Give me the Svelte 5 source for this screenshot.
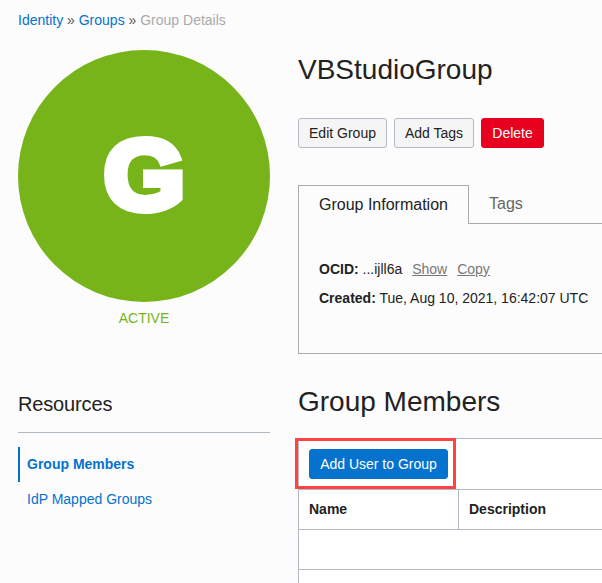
<script>
  const actions = [
    { label: 'Edit Group', kind: 'plain', width: 89 },
    { label: 'Add Tags', kind: 'plain', width: 80 },
    { label: 'Delete', kind: 'danger', width: 63 },
  ];
</script>

<div class="page">
  <nav class="crumbs">
    <a href="#identity">Identity</a> <i>»</i> <a href="#groups">Groups</a> <i>»</i> <span>Group Details</span>
  </nav>
  <div class="columns">
    <aside>
      <div class="badge"><span class="letter">G</span></div>
      <div class="status">ACTIVE</div>
      <h2>Resources</h2>
      <ul>
        <li class="current"><a href="#members">Group Members</a></li>
        <li><a href="#mapped">IdP Mapped Groups</a></li>
      </ul>
    </aside>
    <main>
      <h1>VBStudioGroup</h1>
      <div class="actions">
        {#each actions as action}
          <button class={action.kind} style="width: {action.width}px">{action.label}</button>
        {/each}
      </div>
      <div class="tabs">
        <div class="tab selected">Group Information</div>
        <div class="tab">Tags</div>
      </div>
      <section class="panel">
        <p><b>OCID:</b> ...ijll6a <a class="show" href="#show">Show</a><a class="copy" href="#copy">Copy</a></p>
        <p><b>Created:</b> Tue, Aug 10, 2021, 16:42:07 UTC</p>
      </section>
      <h1 class="members-title">Group Members</h1>
      <section class="grid">
        <div class="toolbar">
          <button class="primary">Add User to Group</button>
          <div class="highlight"></div>
        </div>
        <div class="row head">
          <div class="name">Name</div>
          <div class="desc">Description</div>
        </div>
        <div class="row"></div>
        <div class="row last"></div>
      </section>
    </main>
  </div>
</div>

<style>
  :global(body) {
    margin: 0;
    overflow: hidden;
    background: #fcfcfc;
  }
  .page {
    box-sizing: border-box;
    width: 602px;
    height: 583px;
    overflow: hidden;
    padding: 10px 0 0 18px;
    background: #fcfcfc;
    color: #222;
    font: 14px/20px "Liberation Sans", Arial, sans-serif;
  }
  .page * {
    box-sizing: border-box;
  }
  a {
    color: #0572ce;
    text-decoration: none;
  }
  .crumbs {
    height: 20px;
    white-space: nowrap;
  }
  .crumbs i {
    font-style: normal;
    color: #555;
  }
  .crumbs span {
    color: #aaa;
  }
  .columns {
    display: flex;
    gap: 28px;
    padding-top: 20px;
  }
  aside {
    flex: 0 0 252px;
  }
  .badge {
    display: flex;
    align-items: center;
    justify-content: center;
    width: 252px;
    height: 252px;
    padding: 0 0 4px 1px;
    border-radius: 50%;
    background: #77b41a;
  }
  .letter {
    color: #fff;
    font: 700 99px/99px "Liberation Sans", Arial, sans-serif;
    -webkit-text-stroke: 8px #fff;
    transform: scaleX(1.05);
  }
  .status {
    padding-top: 6px;
    text-align: center;
    color: #77b41a;
  }
  h1, h2, p, ul {
    margin: 0;
    padding: 0;
    font-weight: 400;
  }
  h2 {
    height: 55px;
    margin-top: 50px;
    padding-top: 14px;
    border-bottom: 1px solid #b0b8c2;
    font-size: 20px;
    line-height: 24px;
    letter-spacing: -0.15px;
  }
  ul {
    padding-top: 14px;
    list-style: none;
  }
  li {
    height: 35px;
    padding-left: 7px;
    border-left: 2px solid transparent;
    line-height: 34px;
  }
  li.current {
    border-color: #0572ce;
    font-weight: 700;
  }
  main {
    flex: 0 0 304px;
    min-width: 0;
  }
  h1 {
    padding-top: 1px;
    font-size: 28px;
    line-height: 38px;
  }
  .actions {
    display: flex;
    gap: 7px;
    padding-top: 29px;
  }
  button {
    height: 30px;
    padding: 0;
    border: 1px solid #b3bac5;
    border-radius: 3px;
    background: #f5f5f5;
    color: #222;
    font: inherit;
    white-space: nowrap;
  }
  .danger {
    border-color: #e8001f;
    background: #e8001f;
    color: #fff;
  }
  .tabs {
    display: flex;
    height: 39px;
    margin-top: 37px;
    font-size: 16px;
  }
  .tab {
    flex: 1;
    padding: 9px 20px 0;
    border-bottom: 1px solid #aaa;
    color: #666;
  }
  .tab.selected {
    flex: 0 0 171px;
    border: 1px solid #aaa;
    border-bottom: 0;
    color: #222;
  }
  .panel {
    height: 130px;
    padding: 35px 0 0 20px;
    border-left: 1px solid #aaa;
    border-bottom: 1px solid #aaa;
    white-space: nowrap;
  }
  .panel p {
    height: 29px;
  }
  .panel a {
    color: #777;
    text-decoration: underline;
  }
  .show {
    margin-left: 6px;
  }
  .copy {
    margin-left: 10px;
  }
  .members-title {
    padding-top: 29px;
  }
  .grid {
    margin-top: 17px;
    border: 1px solid #b3bac5;
    border-width: 1px 0 0 1px;
    background: #fff;
  }
  .toolbar {
    position: relative;
    height: 51px;
    padding: 10px 0 0 10px;
    border-bottom: 1px solid #b3bac5;
  }
  .primary {
    display: block;
    width: 139px;
    border-color: #0572ce;
    background: #0572ce;
    color: #fff;
  }
  .highlight {
    position: absolute;
    left: -4px;
    top: -1px;
    width: 161px;
    height: 51px;
    border: 3px solid #ff4343;
  }
  .row {
    display: flex;
    height: 40px;
    border-bottom: 1px solid #b3bac5;
    line-height: 39px;
    font-weight: 700;
  }
  .name {
    width: 160px;
    padding-left: 10px;
    border-right: 1px solid #b3bac5;
  }
  .desc {
    padding-left: 10px;
  }
  .last {
    border-bottom: 0;
  }
</style>
